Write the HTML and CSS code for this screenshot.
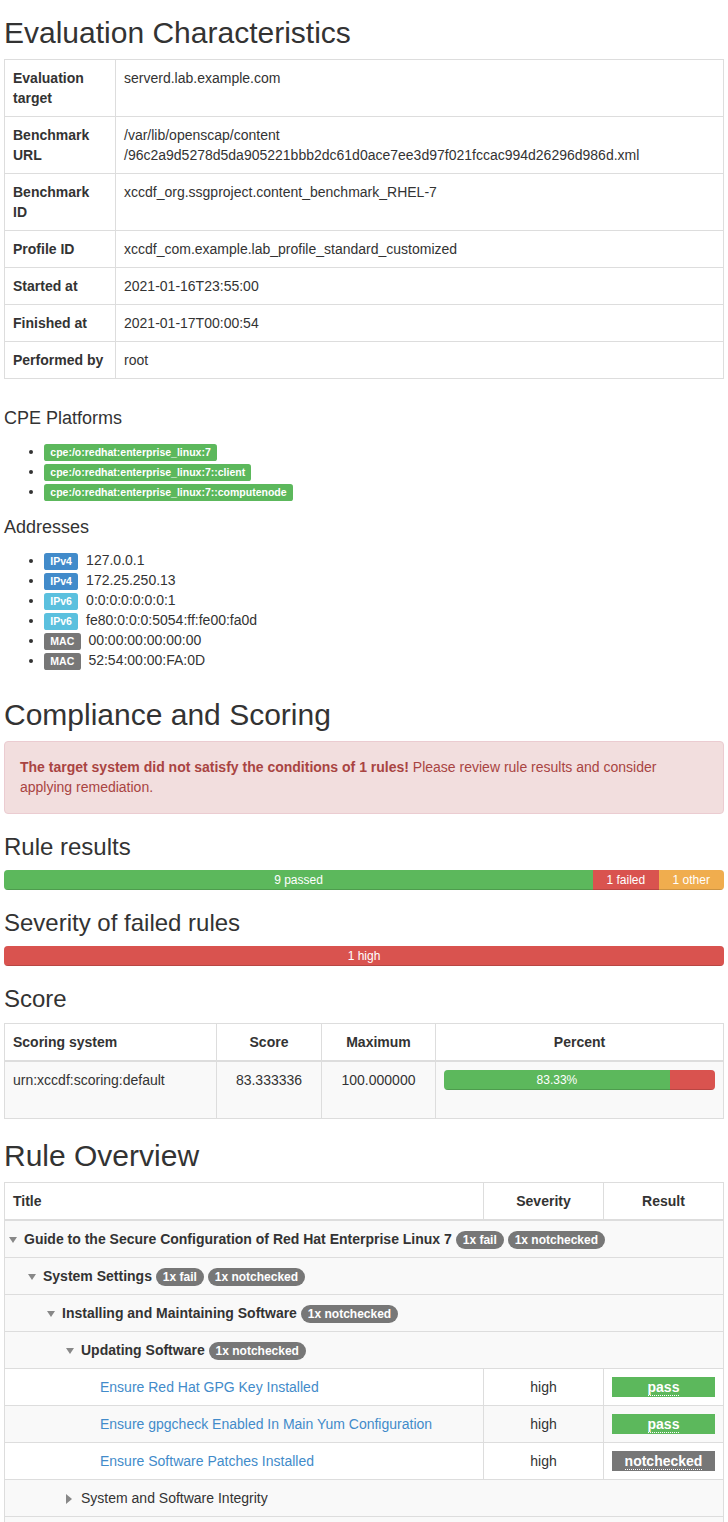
FILE: index.html
```html
<!DOCTYPE html>
<html>
<head>
    <meta charset="utf-8">
    <title>OpenSCAP Evaluation Report</title>
    <link rel="stylesheet" href="styles.css">
</head>
<body>
<div class="report">

    <section id="characteristics">
        <h2 class="first">Evaluation Characteristics</h2>
        <table class="table table-bordered">
            <tr><th class="col-label">Evaluation target</th><td>serverd.lab.example.com</td></tr>
            <tr><th>Benchmark URL</th><td>/var/lib/openscap/content<wbr>/96c2a9d5278d5da905221bbb2dc61d0ace7ee3d97f021fccac994d26296d986d.xml</td></tr>
            <tr><th>Benchmark ID</th><td>xccdf_org.ssgproject.content_benchmark_RHEL-7</td></tr>
            <tr><th>Profile ID</th><td>xccdf_com.example.lab_profile_standard_customized</td></tr>
            <tr><th>Started at</th><td>2021-01-16T23:55:00</td></tr>
            <tr><th>Finished at</th><td>2021-01-17T00:00:54</td></tr>
            <tr><th>Performed by</th><td>root</td></tr>
        </table>

        <h4 class="cpe-title">CPE Platforms</h4>
        <ul class="cpe-list">
            <li><span class="label label-success">cpe:/o:redhat:enterprise_linux:7</span></li>
            <li><span class="label label-success">cpe:/o:redhat:enterprise_linux:7::client</span></li>
            <li><span class="label label-success">cpe:/o:redhat:enterprise_linux:7::computenode</span></li>
        </ul>

        <h4 class="addr-title">Addresses</h4>
        <ul class="addr-list">
            <li><span class="label label-primary">IPv4</span> 127.0.0.1</li>
            <li><span class="label label-primary">IPv4</span> 172.25.250.13</li>
            <li><span class="label label-info">IPv6</span> 0:0:0:0:0:0:0:1</li>
            <li><span class="label label-info">IPv6</span> fe80:0:0:0:5054:ff:fe00:fa0d</li>
            <li><span class="label label-default">MAC</span> 00:00:00:00:00:00</li>
            <li><span class="label label-default">MAC</span> 52:54:00:00:FA:0D</li>
        </ul>
    </section>

    <section id="compliance">
        <h2>Compliance and Scoring</h2>
        <div class="alert alert-danger">
            <strong>The target system did not satisfy the conditions of 1 rules!</strong> Please review rule results and consider applying remediation.
        </div>

        <h3>Rule results</h3>
        <div class="progress">
            <div class="progress-bar progress-bar-success" style="width: 81.82%">9 passed</div>
            <div class="progress-bar progress-bar-danger" style="width: 9.09%">1 failed</div>
            <div class="progress-bar progress-bar-warning" style="width: 9.09%">1 other</div>
        </div>

        <h3>Severity of failed rules</h3>
        <div class="progress">
            <div class="progress-bar progress-bar-danger" style="width: 100%">1 high</div>
        </div>

        <h3>Score</h3>
        <table class="table table-striped table-bordered">
            <thead>
                <tr>
                    <th class="col-system">Scoring system</th>
                    <th class="col-score text-center">Score</th>
                    <th class="col-max text-center">Maximum</th>
                    <th class="text-center">Percent</th>
                </tr>
            </thead>
            <tbody>
                <tr>
                    <td>urn:xccdf:scoring:default</td>
                    <td class="text-center">83.333336</td>
                    <td class="text-center">100.000000</td>
                    <td>
                        <div class="progress">
                            <div class="progress-bar progress-bar-success" style="width: 83.33%">83.33%</div>
                            <div class="progress-bar progress-bar-danger" style="width: 16.67%"></div>
                        </div>
                    </td>
                </tr>
            </tbody>
        </table>
    </section>

    <section id="overview">
        <h2>Rule Overview</h2>
        <table class="table table-bordered treetable">
            <thead>
                <tr>
                    <th>Title</th>
                    <th class="col-severity text-center">Severity</th>
                    <th class="col-result text-center">Result</th>
                </tr>
            </thead>
            <tbody>
                <tr class="group">
                    <td colspan="3" class="lvl-1"><span class="toggle open"></span><strong>Guide to the Secure Configuration of Red Hat Enterprise Linux 7</strong> <span class="badge">1x fail</span> <span class="badge">1x notchecked</span></td>
                </tr>
                <tr class="group">
                    <td colspan="3" class="lvl-2"><span class="toggle open"></span><strong>System Settings</strong> <span class="badge">1x fail</span> <span class="badge">1x notchecked</span></td>
                </tr>
                <tr class="group">
                    <td colspan="3" class="lvl-3"><span class="toggle open"></span><strong>Installing and Maintaining Software</strong> <span class="badge">1x notchecked</span></td>
                </tr>
                <tr class="group">
                    <td colspan="3" class="lvl-4"><span class="toggle open"></span><strong>Updating Software</strong> <span class="badge">1x notchecked</span></td>
                </tr>
                <tr class="rule">
                    <td class="lvl-5"><a href="#rule-gpgkey">Ensure Red Hat GPG Key Installed</a></td>
                    <td class="text-center">high</td>
                    <td class="rule-result rule-result-pass"><div><abbr title="The target system or system component satisfied all the conditions of the rule.">pass</abbr></div></td>
                </tr>
                <tr class="rule odd">
                    <td class="lvl-5"><a href="#rule-gpgcheck">Ensure gpgcheck Enabled In Main Yum Configuration</a></td>
                    <td class="text-center">high</td>
                    <td class="rule-result rule-result-pass"><div><abbr title="The target system or system component satisfied all the conditions of the rule.">pass</abbr></div></td>
                </tr>
                <tr class="rule">
                    <td class="lvl-5"><a href="#rule-patches">Ensure Software Patches Installed</a></td>
                    <td class="text-center">high</td>
                    <td class="rule-result rule-result-notchecked"><div><abbr title="The rule was not evaluated by the checking engine.">notchecked</abbr></div></td>
                </tr>
                <tr class="group">
                    <td colspan="3" class="lvl-4"><span class="toggle closed"></span>System and Software Integrity</td>
                </tr>
                <tr class="group">
                    <td colspan="3" class="lvl-3"><span class="toggle closed"></span>Account and Access Control</td>
                </tr>
            </tbody>
        </table>
    </section>

</div>
</body>
</html>
```

FILE: styles.css
```css
* {
    box-sizing: border-box;
}

body {
    margin: 0;
    font-family: "Liberation Sans", Arial, sans-serif;
    font-size: 14px;
    line-height: 1.42857143;
    color: #333;
    background-color: #fff;
}

.report {
    padding: 0 4px;
}

h2, h3, h4 {
    font-weight: 500;
    line-height: 1.1;
    color: #333;
}

h2 {
    font-size: 30px;
    margin: 20px 0 10px;
}

h2.first {
    margin-top: 16px;
}

h3 {
    font-size: 24px;
    margin: 20px 0 10px;
}

h4 {
    font-size: 18px;
    margin: 10px 0 10px;
}

a {
    color: #428bca;
    text-decoration: none;
}

ul {
    margin: 0 0 10px;
    padding-left: 40px;
}

.text-center {
    text-align: center;
}

/* tables */

.table {
    width: 100%;
    margin-bottom: 20px;
    border-collapse: collapse;
    border-spacing: 0;
}

.table th,
.table td {
    padding: 8px;
    line-height: 20px;
    vertical-align: top;
    text-align: left;
}

.table th.text-center,
.table td.text-center {
    text-align: center;
}

.table-bordered,
.table-bordered th,
.table-bordered td {
    border: 1px solid #ddd;
}

.table thead th {
    vertical-align: bottom;
    border-bottom-width: 2px;
}

.table-striped tbody tr:nth-child(odd) {
    background-color: #f9f9f9;
}

.col-label {
    width: 111px;
}

.col-system {
    width: 212px;
}

.col-score {
    width: 105px;
}

.col-max {
    width: 114px;
}

.col-severity,
.col-result {
    width: 120px;
}

/* labels and badges */

.label {
    display: inline;
    padding: .2em .6em .3em;
    font-size: 75%;
    font-weight: bold;
    line-height: 1;
    color: #fff;
    text-align: center;
    white-space: nowrap;
    vertical-align: baseline;
    border-radius: .25em;
}

.label-success {
    background-color: #5cb85c;
}

.label-primary {
    background-color: #428bca;
}

.label-info {
    background-color: #5bc0de;
}

.label-default {
    background-color: #777;
}

.addr-list .label {
    margin-right: 4px;
}

.cpe-title {
    margin-top: 30px;
    margin-bottom: 12px;
}

.addr-title {
    margin-top: 17px;
    margin-bottom: 12px;
}

.addr-list {
    margin-bottom: 28px;
}

.badge {
    display: inline-block;
    min-width: 10px;
    margin: -2px 0;
    padding: 3px 7px;
    font-size: 12px;
    font-weight: bold;
    line-height: 1;
    color: #fff;
    text-align: center;
    white-space: nowrap;
    vertical-align: middle;
    background-color: #777;
    border-radius: 10px;
}

/* alert */

.alert {
    padding: 15px 15px 16px;
    margin-bottom: 20px;
    border: 1px solid transparent;
    border-radius: 4px;
}

.alert-danger {
    color: #a94442;
    background-color: #f2dede;
    border-color: #ebccd1;
}

/* progress bars */

.progress {
    display: flex;
    height: 20px;
    margin-bottom: 20px;
    overflow: hidden;
    background-color: #f5f5f5;
    border-radius: 4px;
    box-shadow: inset 0 1px 2px rgba(0, 0, 0, .1);
}

.progress-bar {
    height: 100%;
    font-size: 12px;
    line-height: 20px;
    color: #fff;
    text-align: center;
    box-shadow: inset 0 -1px 0 rgba(0, 0, 0, .15);
}

.progress-bar-success {
    background-color: #5cb85c;
}

.progress-bar-danger {
    background-color: #d9534f;
}

.progress-bar-warning {
    background-color: #f0ad4e;
}

/* rule overview tree */

.treetable tr.group,
.treetable tr.odd {
    background-color: #f9f9f9;
}

.lvl-1 { padding-left: 19px !important; }
.lvl-2 { padding-left: 38px !important; }
.lvl-3 { padding-left: 57px !important; }
.lvl-4 { padding-left: 76px !important; }
.lvl-5 { padding-left: 95px !important; }

.toggle {
    display: inline-block;
    width: 0;
    height: 0;
    vertical-align: middle;
    margin-left: -15px;
}

.toggle.open {
    border-left: 4px solid transparent;
    border-right: 4px solid transparent;
    border-top: 6px solid #888;
    margin-right: 7px;
}

.toggle.closed {
    border-top: 5px solid transparent;
    border-bottom: 5px solid transparent;
    border-left: 6px solid #888;
    margin-right: 9px;
}

.rule-result div {
    font-weight: bold;
    color: #fff;
    text-align: center;
}

.rule-result abbr {
    text-decoration: none;
    border-bottom: 1px dotted #fff;
    cursor: help;
}

.rule-result-pass div {
    background-color: #5cb85c;
}

.rule-result-notchecked div {
    background-color: #777;
}
```
